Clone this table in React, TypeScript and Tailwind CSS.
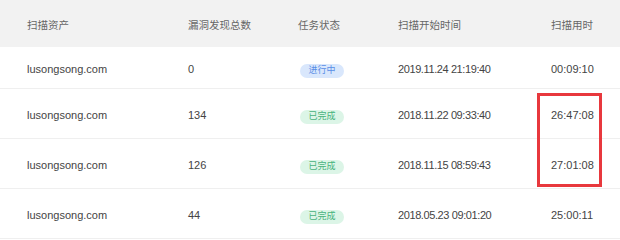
import React from 'react';

type Row = {
    asset: string;
    count: string;
    status: 'running' | 'done';
    start: string;
    duration: string;
};

const rows: Row[] = [
    { asset: 'lusongsong.com', count: '0', status: 'running', start: '2019.11.24 21:19:40', duration: '00:09:10' },
    { asset: 'lusongsong.com', count: '134', status: 'done', start: '2018.11.22 09:33:40', duration: '26:47:08' },
    { asset: 'lusongsong.com', count: '126', status: 'done', start: '2018.11.15 08:59:43', duration: '27:01:08' },
    { asset: 'lusongsong.com', count: '44', status: 'done', start: '2018.05.23 09:01:20', duration: '25:00:11' },
];

const cols = 'grid grid-cols-[161px_110px_100px_153px_1fr] pl-[27px] pt-[4px] items-center';

function StatusBadge({ status }: { status: Row['status'] }) {
    if (status === 'running') {
        return (
            <span className="inline-flex h-[14px] w-[44px] items-center justify-center rounded-full bg-[#d9e7fc] text-[9px] text-[#5a8ee6] ml-[2px]">
                进行中
            </span>
        );
    }
    return (
        <span className="inline-flex h-[14px] w-[44px] items-center justify-center rounded-full bg-[#dcf5e7] text-[9px] text-[#47b27c] ml-[2px]">
            已完成
        </span>
    );
}

export default function App() {
    return (
        <div
            className="relative w-[620px] h-[240px] overflow-hidden bg-white text-[#444]"
            style={{ fontFamily: '"Liberation Sans", "Noto Sans CJK SC", sans-serif' }}
        >
            {/* header */}
            <div className={`${cols} h-[47px] bg-[#f2f2f2] text-[10.5px] text-[#666]`}>
                <div>扫描资产</div>
                <div>漏洞发现总数</div>
                <div>任务状态</div>
                <div>扫描开始时间</div>
                <div>扫描用时</div>
            </div>

            {/* rows */}
            {rows.map((r, i) => (
                <div
                    key={i}
                    className={`${cols} text-[11px] border-b border-[#efefef] ${i === 0 ? 'h-[42px]' : 'h-[50px]'}`}
                >
                    <div>{r.asset}</div>
                    <div>{r.count}</div>
                    <div>
                        <StatusBadge status={r.status} />
                    </div>
                    <div className="tracking-[-0.4px]">{r.start}</div>
                    <div>{r.duration}</div>
                </div>
            ))}

            {/* red highlight annotation */}
            <div className="absolute left-[537px] top-[93px] w-[65px] h-[94px] border-[3px] border-[#e8383d]" />
        </div>
    );
}
